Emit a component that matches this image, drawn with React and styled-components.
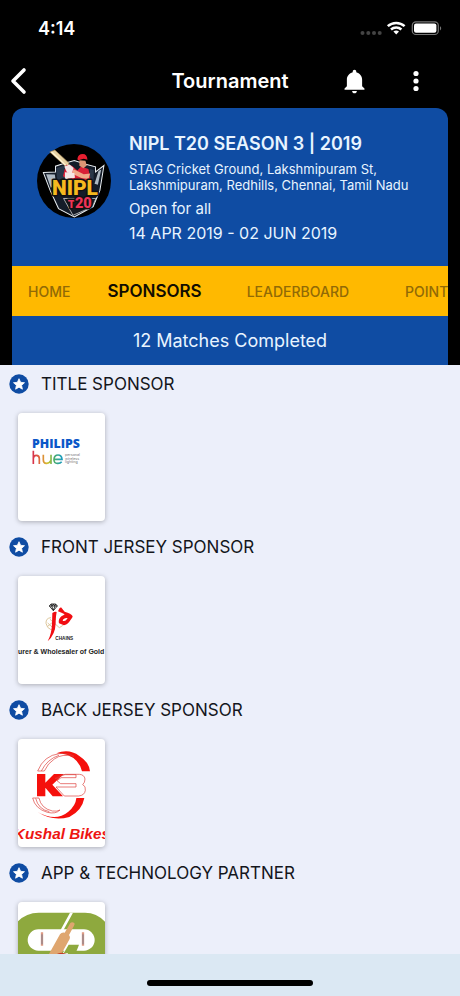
import React from 'react';
import styled, { createGlobalStyle } from 'styled-components';
import { IoMdNotifications } from 'react-icons/io';

const blue = '#0f4ca3';
const yellow = '#ffb900';

const GlobalStyle = createGlobalStyle`
  * {
    box-sizing: border-box;
  }
  body {
    margin: 0;
    background-color: #000;
    font-family: Inter, "Liberation Sans", sans-serif;
  }
`
const Screen = styled.div`
  display: flex;
  flex-direction: column;
  height: 100vh;
  overflow: hidden;
`
const StatusBar = styled.div`
  display: flex;
  align-items: center;
  justify-content: space-between;
  height: 54px;
  padding: 2px 18px 0 38px;
  color: #fff;
  font-size: 18px;
  font-weight: 600;
`
const NavBar = styled.header`
  display: grid;
  grid-template-columns: 88px 1fr 88px;
  align-items: center;
  height: 54px;
  color: #fff;
`
const NavTitle = styled.h1`
  margin: 0;
  font-size: 20px;
  font-weight: 600;
  text-align: center;
`
const NavActions = styled.div`
  display: flex;
  justify-content: space-between;
  margin-left: -34px;
  padding-right: 28px;
`
const IconButton = styled.button`
  display: flex;
  align-items: center;
  justify-content: center;
  width: ${props => props.$width || 32}px;
  height: 32px;
  padding: 0;
  border: 0;
  background: none;
  color: inherit;
`
const Card = styled.section`
  flex: none;
  margin: 0 12px;
  border-radius: 12px 12px 0 0;
  background-color: ${blue};
  color: #e8f4ff;
  overflow: hidden;
`
const Info = styled.div`
  display: flex;
  align-items: center;
  gap: 18px;
  min-height: 158px;
  padding: 0 16px 12px 25px;
`
const InfoText = styled.div`
  display: flex;
  flex-direction: column;
  flex: 1;
  padding-top: 14px;
`
const Name = styled.h2`
  margin: 0;
  font-size: 18px;
  line-height: 24px;
  font-weight: 600;
`
const Address = styled.address`
  max-width: 300px;
  margin: 5px 0 4px;
  font-size: 13px;
  line-height: 16px;
  font-style: normal;
`
const Detail = styled.p`
  margin: 0;
  font-size: ${props => props.$size}px;
  line-height: 24px;
`
const Tabs = styled.nav`
  display: flex;
  align-items: center;
  height: 50px;
  background-color: ${yellow};
  overflow: hidden;
`
const Tab = styled.button`
  flex: none;
  height: 100%;
  padding: 0 ${props => props.$pad}px;
  border: 0;
  background: none;
  font-family: inherit;
  font-size: ${props => props.$active ? 17 : 14}px;
  font-weight: ${props => props.$active ? 600 : 500};
  color: ${props => props.$active ? '#120d00' : '#916a06'};
`
const Progress = styled.p`
  margin: 0;
  font-size: 18px;
  line-height: 49px;
  text-align: center;
`
const Content = styled.main`
  flex: 1;
  min-height: 0;
  background-color: #eceffa;
  overflow-y: auto;
  scrollbar-width: none;
`
const Group = styled.section`
  padding-bottom: 7px;
`
const GroupTitle = styled.h3`
  display: flex;
  align-items: center;
  gap: 12px;
  height: 37px;
  margin: 0 0 11px;
  padding: 0 9px;
  font-size: 17px;
  font-weight: 400;
  color: #14161c;
`
const Tile = styled.a`
  display: block;
  width: 87px;
  height: 108px;
  margin-left: 18px;
  border-radius: 4px;
  background-color: #fff;
  box-shadow: 0 1px 5px rgba(0, 0, 0, .28);
  overflow: hidden;
`
const Logo = styled.svg`
  display: block;
  flex: none;
`
const Footer = styled.footer`
  display: flex;
  flex: none;
  align-items: flex-end;
  justify-content: center;
  height: 42px;
  padding-bottom: 10px;
  background-color: #dbe8f3;
`
const HomeIndicator = styled.div`
  width: 36%;
  height: 6px;
  border-radius: 3px;
  background-color: #000;
`

const StatusIcons = () => (
  <svg width="83" height="18" viewBox="0 0 83 18" aria-hidden="true">
    <g fill="#444">
      <circle cx="3.5" cy="14" r="2" />
      <circle cx="9.3" cy="14" r="2" />
      <circle cx="15" cy="14" r="2" />
      <circle cx="20.7" cy="14" r="2" />
    </g>
    <g fill="none" stroke="#fff" strokeWidth="2.5">
      <path d="M28.8 7.2a12.3 12.3 0 0 1 16.8 0" />
      <path d="M32 10.5a7.7 7.7 0 0 1 10.4 0" />
    </g>
    <path d="M34.4 12.6a4.3 4.3 0 0 1 5.6 0l-2.8 3z" fill="#fff" />
    <rect x="53.3" y="2.9" width="26" height="12.6" rx="3.6" fill="none" stroke="#777" strokeWidth="1.2" />
    <rect x="55" y="4.6" width="22.4" height="9.2" rx="2" fill="#fff" />
    <path d="M81 7.2v4.2c1.6-.6 1.6-3.6 0-4.2z" fill="#777" />
  </svg>
)

const StarBadge = () => (
  <svg width="20" height="20" viewBox="0 0 20 20" aria-hidden="true">
    <circle cx="10" cy="10" r="9.7" fill={blue} />
    <path
      d="M10 4.7l1.6 3.6 3.9.4-2.9 2.6.8 3.9L10 13.2l-3.4 2 .8-3.9-2.9-2.6 3.9-.4z"
      fill="#fff" stroke="#fff" strokeWidth=".8" strokeLinejoin="round"
    />
  </svg>
)

const TeamLogo = () => (
  <Logo width="74" height="74" viewBox="51 44 220 220" role="img" aria-label="NIPL T20">
    <circle cx="161" cy="154" r="110" fill="#000" />
    <path d="M70 129l36-2v-17l22-7 34-10 34 11 29 8v15l25-19-12 74-20 48-56 31-47-25-25-54z" fill="#141c29" stroke="#e9eef2" strokeWidth="3" />
    <path d="M78 134l26 1 4 30-16 9zM234 124l8-4-10 45-10-3z" fill="#aeb9c4" />
    <path d="M108 116l24-8 6 37-27 5zM208 118l12 3-1 34-12-3z" fill="#293749" />
    <path d="M89 68l15-6 41 38 1 13-10-3z" fill="#e8d3a4" stroke="#a58657" strokeWidth="2" />
    <path d="M94 67l42 40" stroke="#fff5d6" strokeWidth="4" />
    <path d="M137 106l18 3 16 14 11-12 22 7 7 35-57 1-26-14z" fill="#d91f37" />
    <path d="M160 119l30 15 19-2-5 16-21-3-29-13z" fill="#f0a98a" />
    <path d="M132 111l16-6 12 10-5 15-15-2zM134 128l28 2 2 14-30 5z" fill="#f5e6e5" />
    <path d="M177 92l18 2 4 14-10 8-12-7z" fill="#dc9474" />
    <path d="M171 89q2-15 16-15 13 0 14 17l-11-3-16 4z" fill="#e81f30" />
    <path d="M130 206l28 50 58-25 10-25z" fill="#151a24" stroke="#eee" strokeWidth="2" />
    <g fontFamily="Roboto, sans-serif" fontWeight="900" textAnchor="middle" style={{ paintOrder: 'stroke' }} stroke="#111" strokeWidth="9" strokeLinejoin="round">
      <text x="164" y="195" fontSize="62" fill="#f5b91f">NIPL</text>
      <text x="178" y="233" fontSize="43" fill="#ef3457">
        <tspan fontSize="34">T</tspan>20
      </text>
    </g>
  </Logo>
)

const PhilipsLogo = () => (
  <Logo width="87" height="108" viewBox="55 38 261 324" role="img" aria-label="Philips hue">
    <defs>
      <linearGradient id="hue" x1="0" x2="1">
        <stop offset="0" stopColor="#d8344c" />
        <stop offset=".25" stopColor="#e0703a" />
        <stop offset=".5" stopColor="#d5c52f" />
        <stop offset=".7" stopColor="#4fae62" />
        <stop offset="1" stopColor="#1c9cc0" />
      </linearGradient>
    </defs>
    <text x="97" y="142" fontFamily="'Open Sans', sans-serif" fontWeight="800" fontSize="37" fill="#0b57c8">PHILIPS</text>
    <g fill="none" stroke="url(#hue)" strokeWidth="5">
      <path d="M101 151v40M101 174q1-9 9-9 9 0 9 10v16M131 163v16q0 10 9 10t14-9v-17m0 0v28M164 177h23q-1-13-12-13t-12 13 12 12q7 0 11-5" />
    </g>
    <g fontFamily="Inter, sans-serif" fontSize="11" fill="#777">
      <text x="196" y="167">personal</text>
      <text x="196" y="178">wireless</text>
      <text x="196" y="189">lighting</text>
    </g>
  </Logo>
)

const ChainsLogo = () => (
  <Logo width="87" height="108" viewBox="55 47 261 324" role="img" aria-label="JD Chains">
    <path d="M154 131h14l5 6-12 14-12-14zM149 137h24M156 137l5 13 5-13M154 131l3 6 4-6 4 6 3-6" fill="none" stroke="#111" strokeWidth="2.5" />
    <path d="M154 172q-16 1-15 17 3 15 15 19l12-9M151 177l28 25q13-5 15-16M144 188l22 20M143 199l25-21" fill="none" stroke="#dcc69c" strokeWidth="3" />
    <path d="M158 158q8-5 13-3-3 14-3 34-1 34-24 54 12-23 13-53z" fill="#f10d12" />
    <path d="M175 153q3-10 9-12l11 13q20 5 24 14 0 4-6 10-6 12-20 17l-15-6q-4-16 13-24l4-3q-12-6-20-9zm14 28q9 4 15-8-13-1-15 8z" fill="#f10d12" fillRule="evenodd" />
    <g fontFamily="'Liberation Sans', sans-serif" fontWeight="700" fill="#222">
      <text x="167" y="240" fontSize="14">CHAINS</text>
      <text x="55" y="282" fontSize="21">urer &amp; Wholesaler of Gold Jewellery</text>
    </g>
  </Logo>
)

const BikesLogo = () => (
  <Logo width="87" height="108" viewBox="55 41 261 324" role="img" aria-label="Kushal Bikes">
    <g fill="#f5100c">
      <path d="M170 84q38-15 69 8 30 19 32 46h-24q-8-35-43-49-16-5-34-5z" />
      <path d="M114 260q54 31 92-1 22-18 24-41h24q-7 38-45 57-51 14-95-15z" />
      <path d="M112 146h25v26l26-26h29l-34 32 32 35h-31l-22-26v26h-25z" />
    </g>
    <g fill="none" stroke="#dc3b37" strokeWidth="2">
      <path d="M114 137q19-47 65-52 29-4 44 8-36-9-59 8-20 13-30 36zM125 137q18-36 53-47M99 218h19q6 31 40 39 15 2 23-3-13 13-38 7-37-11-44-43zM108 219q8 33 41 40" />
      <path d="M197 147h42q15 1 17 14 0 11-7 17 10 4 8 17-2 15-20 17h-43l-25-27h60v-10h-46l-11-9 12-9h45v-9h-44l-13 12-6-1z" />
    </g>
    <text x="187" y="342" textAnchor="middle" fontFamily="'Liberation Sans', sans-serif" fontWeight="700" fontStyle="italic" fontSize="46" fill="#ee1511">Kushal Bikes</text>
  </Logo>
)

const PartnerLogo = () => (
  <Logo width="87" height="108" viewBox="55 65 261 324" role="img" aria-label="Cricket app">
    <path d="M55 123q25-26 62-26h139q35 0 60 27v265H55z" fill="#8ea93e" />
    <rect x="84" y="147" width="201" height="64" rx="32" fill="#fff" />
    <path d="M211 97h9l-30 55h-9zM188 222l12-24h38l-8 14h-22l-4 10z" fill="#fff" />
    <path d="M207 193h31l-10 26h-36z" fill="#8ea93e" />
    <path d="M145 226l36-64q5-7 14-5l17-29q5-5 12 0 2 3-1 8l-15 28q5 6 2 12l-28 50z" fill="#dfa66f" />
    <path d="M170 222q14-9 33 0v10h-33z" fill="#c33d26" />
    <g strokeWidth="7">
      <path d="M127 156v40M250 156v40" stroke="#df9a83" />
      <path d="M127 162v30M250 162v30" stroke="#777e91" strokeWidth="3" />
    </g>
  </Logo>
)

const tabs = [
  { label: 'HOME', pad: 16 },
  { label: 'SPONSORS', pad: 21, active: true },
  { label: 'LEADERBOARD', pad: 24 },
  { label: 'POINTS', pad: 32 },
]

const sponsors = [
  { title: 'TITLE SPONSOR', logo: <PhilipsLogo /> },
  { title: 'FRONT JERSEY SPONSOR', logo: <ChainsLogo /> },
  { title: 'BACK JERSEY SPONSOR', logo: <BikesLogo /> },
  { title: 'APP & TECHNOLOGY PARTNER', logo: <PartnerLogo /> },
]

export default () => {
  return (
    <Screen>
      <GlobalStyle />
      <StatusBar>
        <span>4:14</span>
        <StatusIcons />
      </StatusBar>
      <NavBar>
        <IconButton $width={38} aria-label="Back">
          <svg width="18" height="28" viewBox="0 0 18 28" fill="none" stroke="#fff" strokeWidth="3.6" strokeLinecap="round" strokeLinejoin="round">
            <path d="M14 3L3 14l11 11" />
          </svg>
        </IconButton>
        <NavTitle>Tournament</NavTitle>
        <NavActions>
          <IconButton aria-label="Notifications">
            <IoMdNotifications size={29} />
          </IconButton>
          <IconButton aria-label="More">
            <svg width="6" height="22" viewBox="0 0 6 22" fill="currentColor">
              <circle cx="3" cy="3.5" r="2.6" />
              <circle cx="3" cy="11" r="2.6" />
              <circle cx="3" cy="18.5" r="2.6" />
            </svg>
          </IconButton>
        </NavActions>
      </NavBar>
      <Card>
        <Info>
          <TeamLogo />
          <InfoText>
            <Name>NIPL T20 SEASON 3 | 2019</Name>
            <Address>
              STAG Cricket Ground, Lakshmipuram St, Lakshmipuram, Redhills, Chennai, Tamil Nadu
            </Address>
            <Detail $size={15}>Open for all</Detail>
            <Detail $size={16}>14 APR 2019 - 02 JUN 2019</Detail>
          </InfoText>
        </Info>
        <Tabs>
          {tabs.map(tab => (
            <Tab key={tab.label} $pad={tab.pad} $active={tab.active}>{tab.label}</Tab>
          ))}
        </Tabs>
        <Progress>12 Matches Completed</Progress>
      </Card>
      <Content>
        {sponsors.map(sponsor => (
          <Group key={sponsor.title}>
            <GroupTitle>
              <StarBadge />
              {sponsor.title}
            </GroupTitle>
            <Tile href="#">{sponsor.logo}</Tile>
          </Group>
        ))}
      </Content>
      <Footer>
        <HomeIndicator />
      </Footer>
    </Screen>
  )
}
